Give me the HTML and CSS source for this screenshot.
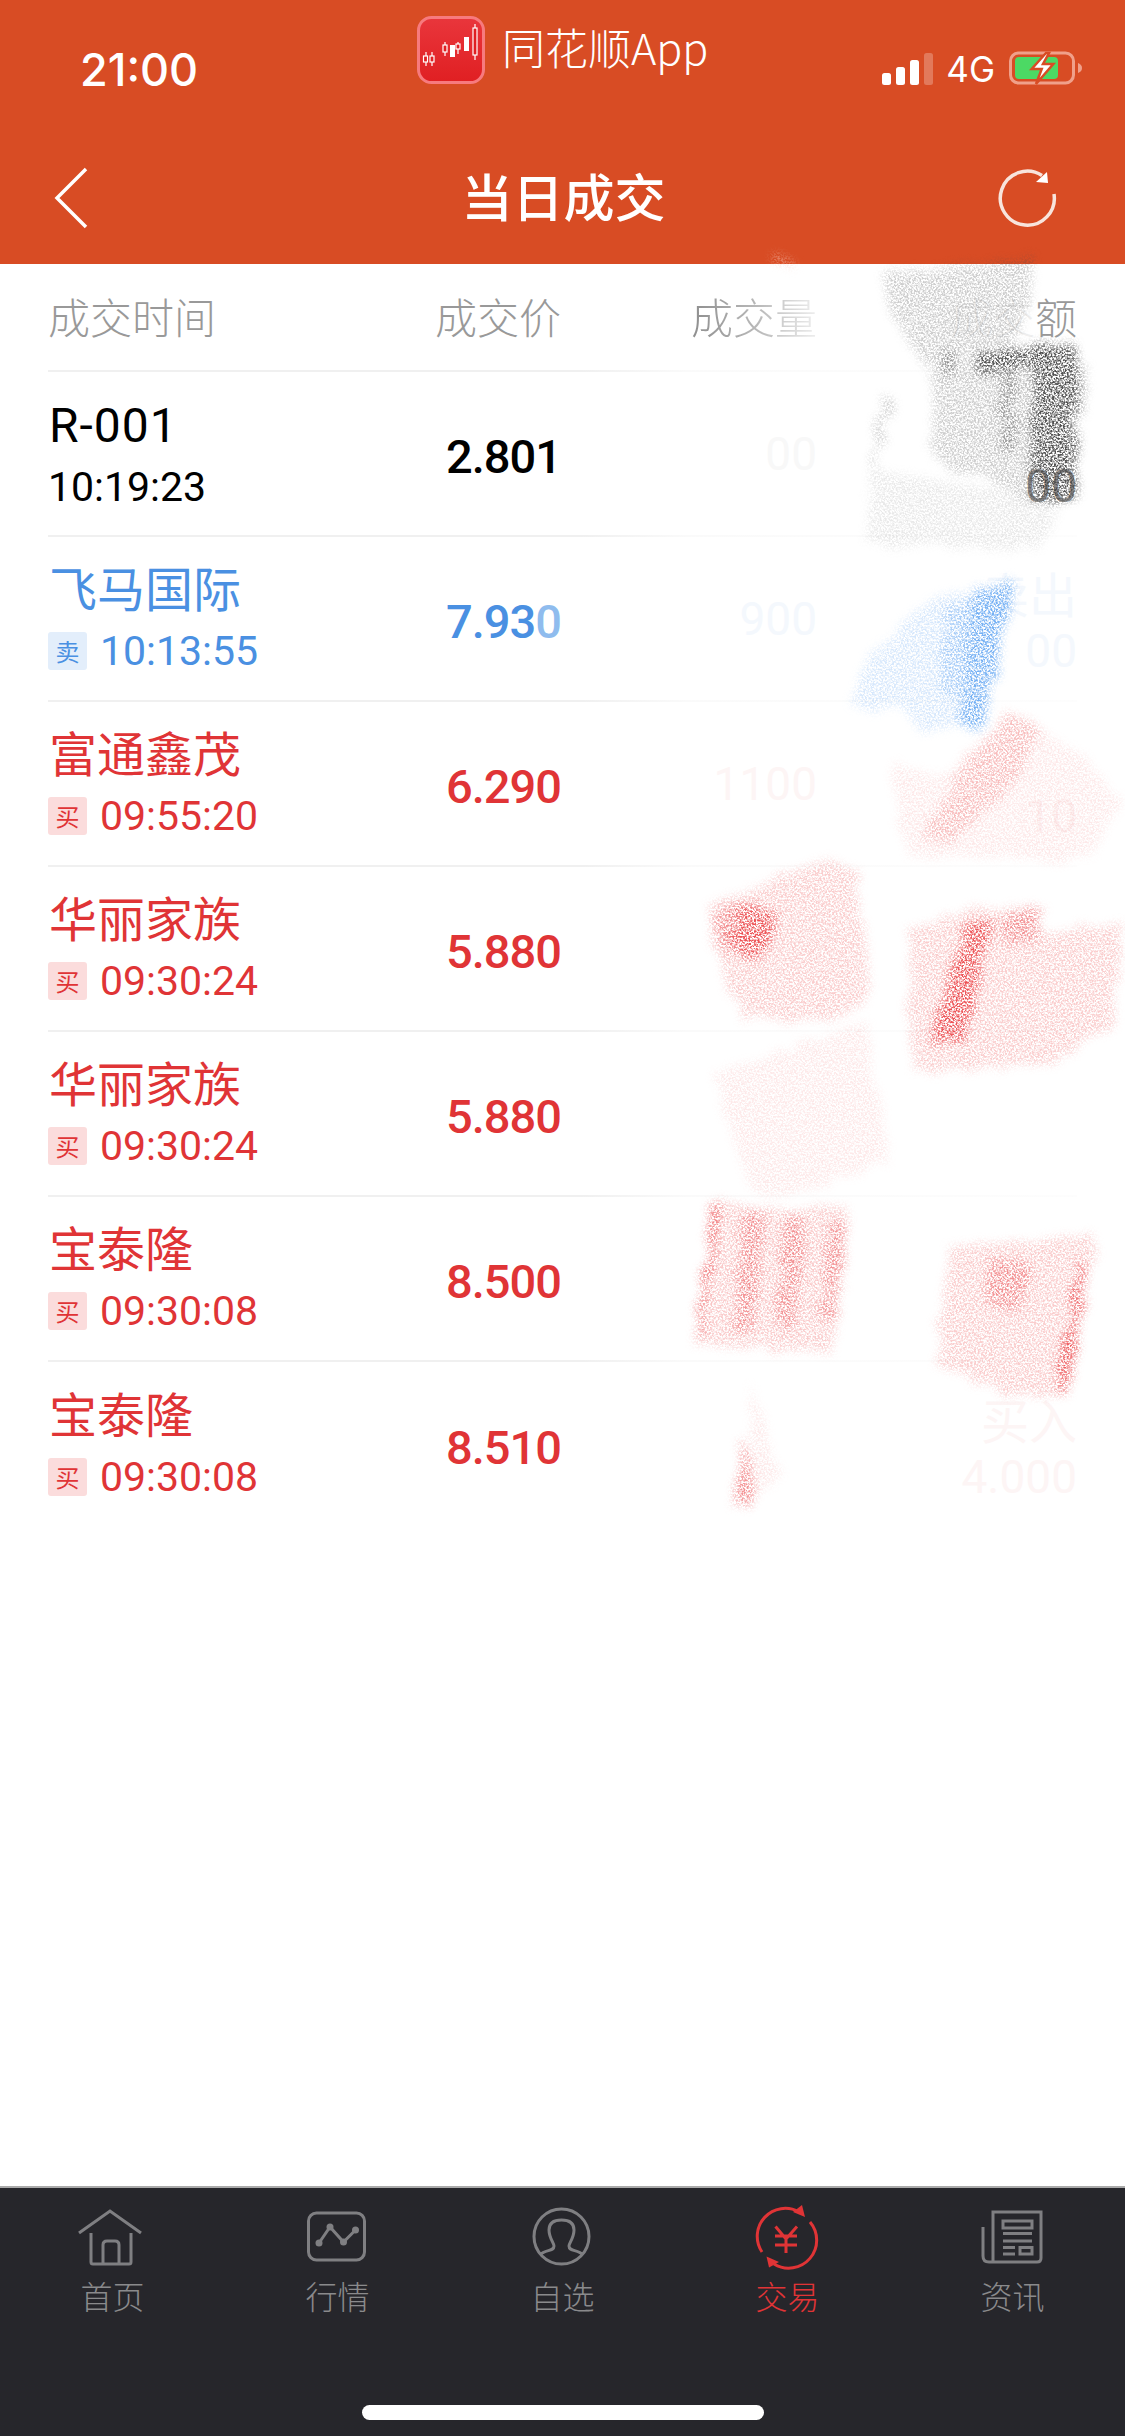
FILE: index.html

```html
<!DOCTYPE html>
<html lang="zh-CN">
<head>
    <meta charset="UTF-8">
    <title>当日成交</title>
    <link rel="stylesheet" href="styles.css">
</head>
<body>
<div class="phone">
    <header class="topbar">
        <div class="status">
            <span class="clock">21:00</span>
            <div class="source-app">
                <svg class="app-logo" viewBox="0 0 68 68">
                    <defs>
                        <linearGradient id="logoFill" x1="0" y1="0" x2="0" y2="1">
                            <stop offset="0" stop-color="#e9363c"/>
                            <stop offset="1" stop-color="#e01f22"/>
                        </linearGradient>
                    </defs>
                    <rect x="1.5" y="1.5" width="65" height="65" rx="13" fill="url(#logoFill)" stroke="#f77a7e" stroke-width="3"/>
                    <g fill="#e01f22" stroke="#fff" stroke-width="1.200">
                        <path d="M9 36v14M15 36v14M28 26v14M41 26v12M58 8v36"/>
                        <rect x="6.500" y="40" width="4" height="6"/>
                        <rect x="13" y="40" width="4" height="6"/>
                        <rect x="26" y="29" width="4" height="7"/>
                        <rect x="39" y="28" width="4" height="5"/>
                        <rect x="56" y="12" width="4" height="27"/>
                    </g>
                    <rect x="33" y="29" width="5" height="12" fill="#fff"/>
                    <rect x="47" y="21" width="5" height="14" fill="#fff"/>
                </svg>
                <span class="app-name">同花顺App</span>
            </div>
            <div class="indicators">
                <svg class="signal" viewBox="0 0 52 32">
                    <rect x="0" y="20" width="9" height="12" rx="2.5" fill="#fff"/>
                    <rect x="14" y="14" width="9" height="18" rx="2.5" fill="#fff"/>
                    <rect x="28" y="7" width="9" height="25" rx="2.5" fill="#fff"/>
                    <rect x="42" y="0" width="9" height="32" rx="2.5" fill="#fff" opacity="0.25"/>
                </svg>
                <span class="network">4G</span>
                <svg class="battery" viewBox="0 0 80 40">
                    <rect x="5.5" y="4" width="63" height="30" rx="8" fill="none" stroke="#f0a08a" stroke-width="3"/>
                    <path d="M73 14c3 1 4 3 4 5s-1 4-4 5z" fill="#f0a08a"/>
                    <rect x="10" y="8" width="43" height="22" rx="4" fill="#4cd964"/>
                    <polygon points="41,4 26.7,20 36.7,20 31,35 48.3,15 38,15 44,4" fill="#fff" stroke="#d84c24" stroke-width="2.5"/>
                </svg>
            </div>
        </div>
        <nav class="navbar">
            <svg class="nav-back" viewBox="0 0 34 62"><path d="M32 2 3 31l29 29"/></svg>
            <h1 class="nav-title">当日成交</h1>
            <svg class="nav-refresh" viewBox="0 0 64 64">
                <path class="refresh-arc" d="M59 28A27 27 0 1 1 47 9.5"/>
                <polygon points="41,16 53,17 52,6" fill="#fff"/>
            </svg>
        </nav>
    </header>

    <main class="deals">
        <div class="row head">
            <span>成交时间</span>
            <span class="num">成交价</span>
            <span class="num fade-out">成交量</span>
            <span class="num"><span class="covered">成交</span>额</span>
        </div>

        <div class="row black">
            <div class="who"><span class="name latin">R-001</span><span class="time">10:19:23</span></div>
            <span class="price">2.801</span>
            <span class="vol worn-grey">00</span>
            <div class="amount"><span class="side"></span><span class="money dark-end">00</span></div>
        </div>
        <div class="row blue">
            <div class="who"><span class="name">飞马国际</span><span class="time"><i class="tag">卖</i>10:13:55</span></div>
            <span class="price">7.93<span class="worn-digit">0</span></span>
            <span class="vol worn-blue">900</span>
            <div class="amount worn-blue"><span class="side">卖出</span><span class="money">00</span></div>
        </div>
        <div class="row red">
            <div class="who"><span class="name">富通鑫茂</span><span class="time"><i class="tag">买</i>09:55:20</span></div>
            <span class="price">6.290</span>
            <span class="vol worn-red">1100</span>
            <div class="amount worn-red"><span class="side"></span><span class="money">10</span></div>
        </div>
        <div class="row red">
            <div class="who"><span class="name">华丽家族</span><span class="time"><i class="tag">买</i>09:30:24</span></div>
            <span class="price">5.880</span>
            <span class="vol"></span>
            <div class="amount"></div>
        </div>
        <div class="row red">
            <div class="who"><span class="name">华丽家族</span><span class="time"><i class="tag">买</i>09:30:24</span></div>
            <span class="price">5.880</span>
            <span class="vol"></span>
            <div class="amount"></div>
        </div>
        <div class="row red">
            <div class="who"><span class="name">宝泰隆</span><span class="time"><i class="tag">买</i>09:30:08</span></div>
            <span class="price">8.500</span>
            <span class="vol"></span>
            <div class="amount"></div>
        </div>
        <div class="row red last">
            <div class="who"><span class="name">宝泰隆</span><span class="time"><i class="tag">买</i>09:30:08</span></div>
            <span class="price">8.510</span>
            <span class="vol"></span>
            <div class="amount worn-red"><span class="side">买入</span><span class="money">4.000</span></div>
        </div>
    </main>

    <footer class="tabbar">
        <div class="tabs">
            <div class="tab">
                <svg viewBox="0 0 72 60">
                    <path d="M2 25 33 3l31 22M14 25v29q0 2 2 2h36q2 0 2-2V25M26 56V37q0-4 4-4h8q4 0 4 4v19"/>
                </svg>
                <span>首页</span>
            </div>
            <div class="tab">
                <svg viewBox="0 0 72 60">
                    <rect x="6.5" y="5" width="56" height="47" rx="8"/>
                    <path d="M17 35 28 19l13.500 15L53.500 22"/>
                    <g class="dots">
                        <circle cx="17" cy="35" r="3.500"/>
                        <circle cx="28" cy="19" r="3.500"/>
                        <circle cx="41.500" cy="34" r="3.500"/>
                        <circle cx="53.500" cy="22" r="3.500"/>
                    </g>
                </svg>
                <span>行情</span>
            </div>
            <div class="tab">
                <svg viewBox="0 0 72 60">
                    <circle cx="34.500" cy="28.500" r="27.500"/>
                    <path d="M13 47c5-6 14-3 14-9 0-3-5-8-5-16 0-8 6-10 12.500-10S47 14 47 22c0 8-5 13-5 16 0 6 9 3 14 9"/>
                </svg>
                <span>自选</span>
            </div>
            <div class="tab active">
                <svg viewBox="0 0 72 60">
                    <path d="M10 44A28 28 0 0 1 47 4M58 14A28 28 0 0 1 22 56"/>
                    <g class="dots">
                        <polygon points="53,9 50,-3 41,4"/>
                        <polygon points="14.500,48.500 17,59.500 27,54"/>
                    </g>
                    <path d="M23.500 18.500 34 31l11-12.500M23 28h22M23 37h22M34 30v15"/>
                </svg>
                <span>交易</span>
            </div>
            <div class="tab">
                <svg viewBox="0 0 72 60">
                    <path d="M6 19v29q0 6 6 6h48q4 0 4-4V4H16v50"/>
                    <rect x="26" y="13" width="29" height="7"/>
                    <path d="M26 25.500h29M26 33h29M26 39.500h12M26 46h12"/>
                    <rect x="43" y="39.500" width="12" height="6.500"/>
                </svg>
                <span>资讯</span>
            </div>
        </div>
        <div class="home-bar"></div>
    </footer>

    <!-- pencil scribbles lying over the right hand columns -->
    <svg class="scribbles" viewBox="0 0 1125 2436">
        <defs>
            <filter id="grain" filterUnits="userSpaceOnUse" x="600" y="230" width="525" height="1320" color-interpolation-filters="sRGB">
                <feTurbulence type="fractalNoise" baseFrequency="0.06" numOctaves="3" seed="3" result="wobble"/>
                <feDisplacementMap in="SourceGraphic" in2="wobble" scale="18" xChannelSelector="R" yChannelSelector="G" result="rough"/>
                <feGaussianBlur in="rough" stdDeviation="5" result="soft"/>
                <feTurbulence type="fractalNoise" baseFrequency="0.55" numOctaves="3" seed="7"/>
                <feColorMatrix values="0 0 0 0 0 0 0 0 0 0 0 0 0 0 0 3.500 0 0 0 -1.300" result="speck"/>
                <feComposite in="soft" in2="speck" operator="in" result="dusted"/>
                <feGaussianBlur in="dusted" stdDeviation="0.5"/>
            </filter>
        </defs>
        <g filter="url(#grain)">
            <polygon class="ink-grey pale" points="883,272 1030,259 1033,290 1017,343 923,362 893,313"/>
            <polygon class="ink-grey faint" points="866,539 873,470 1000,490 1060,510 1040,550 880,545"/>
            <polygon class="ink-grey pale" points="1073,366 1090,366 1073,470"/>
            <polygon class="ink-grey light" points="883,397 890,399 873,470 866,500"/>
            <polygon class="ink-grey pale" points="933,360 1077,343 1073,500 1023,500 1000,485 933,462"/>
            <polygon class="ink-grey mid" points="940,352 955,348 955,372 940,375"/>
            <polygon class="ink-grey strong" points="975,352 1077,343 1075,362 975,372"/>
            <polygon class="ink-grey strong" points="1033,355 1077,343 1073,500 1030,500"/>
            <polygon class="ink-grey light" points="1000,360 1015,360 1015,450 1000,450"/>

            <polygon class="ink-blue pale" points="850,707 870,657 940,592 1013,583 983,730 913,730 907,707"/>
            <polygon class="ink-blue strong" points="973,592 1013,583 983,730 957,723"/>
            <polygon class="ink-blue light" points="945,612 975,600 955,700 940,695"/>

            <polygon class="ink-red faint" points="1010,711 1073,750 1122,800 1090,860 905,860 890,760 940,780"/>
            <polygon class="ink-red pale" points="1010,711 1040,735 1000,800 950,840 920,840 960,770"/>

            <polygon class="ink-red pale" points="708,907 827,858 853,871 873,992 840,1019 743,1019 713,943"/>
            <polygon class="ink-red strong" points="737,902 777,916 767,947 750,965 730,943"/>
            <polygon class="ink-red light" points="712,915 740,905 735,950 725,955"/>

            <polygon class="ink-red pale" points="907,929 977,907 1043,909 1043,934 1123,923 1113,1023 1053,1063 913,1072"/>
            <polygon class="ink-red strong" points="963,929 990,920 967,1036 927,1045"/>
            <polygon class="ink-red light" points="1000,915 1043,909 1040,935 1005,945"/>

            <polygon class="ink-red faint" points="713,1072 867,1023 890,1161 780,1197 750,1188"/>

            <polygon class="ink-red pale" points="713,1202 847,1211 840,1313 830,1353 693,1344"/>
            <polygon class="ink-red strong" points="712,1202 720,1204 703,1336 697,1331"/>
            <polygon class="ink-red light" points="745,1205 765,1207 755,1330 735,1330"/>
            <polygon class="ink-red light" points="785,1215 805,1217 795,1330 775,1330"/>
            <polygon class="ink-red light" points="830,1220 845,1222 835,1320 820,1320"/>

            <polygon class="ink-red pale" points="950,1246 1097,1235 1067,1394 1007,1394 937,1367"/>
            <polygon class="ink-red strong" points="1080,1260 1087,1264 1067,1391 1057,1389"/>
            <polygon class="ink-red light" points="990,1258 1030,1265 1020,1310 985,1305"/>

            <polygon class="ink-red faint" points="750,1380 780,1470 753,1501"/>
            <polygon class="ink-red mid" points="747,1434 753,1501 735,1505"/>

            <polygon class="ink-paper" points="773,250 797,264 775,264"/>
            <polygon class="ink-grey pale" points="975,264 1030,258 1032,264"/>
        </g>
    </svg>
</div>
</body>
</html>
```

FILE: styles.css

```css
* {
    box-sizing: border-box;
}
body {
    margin: 0;
    font-family: "Noto Sans CJK SC", Roboto, sans-serif;
    background: #fff;
}
.phone {
    position: relative;
    width: 1125px;
    height: 2436px;
    display: flex;
    flex-direction: column;
    overflow: hidden;
}

/* top bar */
.topbar {
    height: 264px;
    background: #d84c24;
    color: #fff;
}
.status {
    height: 138px;
    display: flex;
    align-items: center;
    padding: 0 43px 0 80px;
}
.clock {
    width: 118px;
    font-family: Inter, sans-serif;
    font-size: 45px;
    font-weight: 500;
    white-space: nowrap;
}
.source-app {
    align-self: flex-start;
    display: flex;
    align-items: flex-start;
    gap: 17px;
    margin: 16px 0 0 219px;
}
.app-logo {
    width: 68px;
    height: 68px;
}
.app-name {
    font-size: 43px;
    font-weight: 300;
    line-height: 60px;
}
.indicators {
    margin-left: auto;
    display: flex;
    align-items: center;
}
.signal {
    width: 52px;
    height: 32px;
}
.network {
    margin-left: 12px;
    font-family: Inter, sans-serif;
    font-size: 35px;
    line-height: 40px;
}
.battery {
    width: 80px;
    height: 40px;
    margin-left: 10px;
    margin-right: -3px;
}
.navbar {
    height: 120px;
    display: grid;
    grid-template-columns: 1fr auto 1fr;
    align-items: center;
    padding: 0 62px;
}
.nav-back {
    width: 34px;
    height: 62px;
    margin-left: -8px;
}
.nav-back path {
    fill: none;
    stroke: #fff;
    stroke-width: 3.5;
}
.nav-title {
    margin: 0 0 6px 2px;
    font-size: 51px;
    font-weight: 500;
}
.nav-refresh {
    width: 64px;
    height: 64px;
    justify-self: end;
    margin-right: 4px;
}
.refresh-arc {
    fill: none;
    stroke: #f8e4dc;
    stroke-width: 3.5;
}

/* deals table */
.deals {
    flex: 1;
    padding: 0 48px;
}
.row {
    display: grid;
    grid-template-columns: 1fr 200px 256px 260px;
    align-items: center;
    height: 165px;
    border-bottom: 2px solid;
    border-image: linear-gradient(90deg, #f0f0f0 52%, #fafafa 62%, #fdfdfd 100%) 1;
}
.row.last {
    border-bottom: 0;
}
.row.head {
    height: 108px;
    font-size: 42px;
    font-weight: 300;
    color: #999;
    padding-bottom: 3px;
}
.num {
    text-align: right;
}
.covered {
    color: #efefef;
}
.fade-out {
    background: linear-gradient(90deg, #8e8e8e 0%, #bbb 55%, #eee 100%);
    -webkit-background-clip: text;
    background-clip: text;
    color: transparent;
    justify-self: end;
}
.black {
    color: #000;
}
.blue {
    color: #4a90e2;
}
.red {
    color: #e03436;
}
.who {
    display: flex;
    flex-direction: column;
    gap: 15px;
    padding-bottom: 6px;
}
.black .who {
    gap: 11px;
    padding-bottom: 0;
}
.name {
    font-size: 48px;
    line-height: 56px;
    margin-left: 1px;
    white-space: nowrap;
}
.name.latin {
    font-family: Roboto, sans-serif;
    letter-spacing: 1px;
}
.time {
    display: flex;
    align-items: center;
    font-family: Roboto, sans-serif;
    font-size: 41px;
    line-height: 44px;
    white-space: nowrap;
}
.tag {
    width: 39px;
    height: 38px;
    margin-right: 13px;
    border-radius: 3px;
    font-family: "Noto Sans CJK SC", sans-serif;
    font-size: 24px;
    font-style: normal;
    line-height: 38px;
    text-align: center;
}
.blue .tag {
    background: #e3eefb;
}
.red .tag {
    background: #fbdcdc;
}
.price {
    padding-top: 5px;
    text-align: right;
    font-family: Roboto, sans-serif;
    font-size: 47px;
    font-weight: 500;
    letter-spacing: -1px;
}
.worn-digit {
    color: #8fbcee;
}
.vol {
    text-align: right;
    font-family: Roboto, sans-serif;
    font-size: 46px;
}
.amount {
    display: flex;
    flex-direction: column;
    align-items: flex-end;
    gap: 9px;
}
.side {
    font-size: 48px;
    line-height: 56px;
    min-height: 56px;
}
.money {
    font-family: Roboto, sans-serif;
    font-size: 46px;
    line-height: 44px;
}
.dark-end {
    color: #888;
}
.worn-grey {
    color: #f8f8f8;
}
.worn-blue {
    color: #f4f8fd;
}
.worn-red {
    color: #fdf5f5;
}

/* tab bar */
.tabbar {
    height: 250px;
    background: #26262b;
    border-top: 2px solid #aaa;
}
.tabs {
    display: grid;
    grid-template-columns: repeat(5, 1fr);
    padding-top: 20px;
}
.tab {
    display: flex;
    flex-direction: column;
    align-items: center;
    color: #8a8a8c;
    font-size: 32px;
    font-weight: 300;
    line-height: 44px;
}
.tab svg {
    width: 72px;
    height: 60px;
    overflow: visible;
    margin-bottom: 5px;
    fill: none;
    stroke: #7f7f82;
    stroke-width: 3;
}
.tab .dots {
    fill: #7f7f82;
    stroke: none;
}
.tab.active {
    color: #e03436;
}
.tab.active svg {
    stroke: #e03436;
}
.tab.active .dots {
    fill: #e03436;
}
.home-bar {
    width: 402px;
    height: 15px;
    margin: 88px auto 0;
    border-radius: 8px;
    background: #fff;
}

/* scribbles */
.scribbles {
    position: absolute;
    top: 0;
    left: 0;
    width: 1125px;
    height: 2436px;
    pointer-events: none;
}
.ink-grey {
    fill: #4a4a4a;
}
.ink-blue {
    fill: #6fadf3;
}
.ink-red {
    fill: #ec4a4d;
}
.ink-paper {
    fill: #f7c9bb;
}
.faint {
    opacity: 0.12;
}
.pale {
    opacity: 0.28;
}
.light {
    opacity: 0.45;
}
.mid {
    opacity: 0.65;
}
.strong {
    opacity: 0.95;
}
```
